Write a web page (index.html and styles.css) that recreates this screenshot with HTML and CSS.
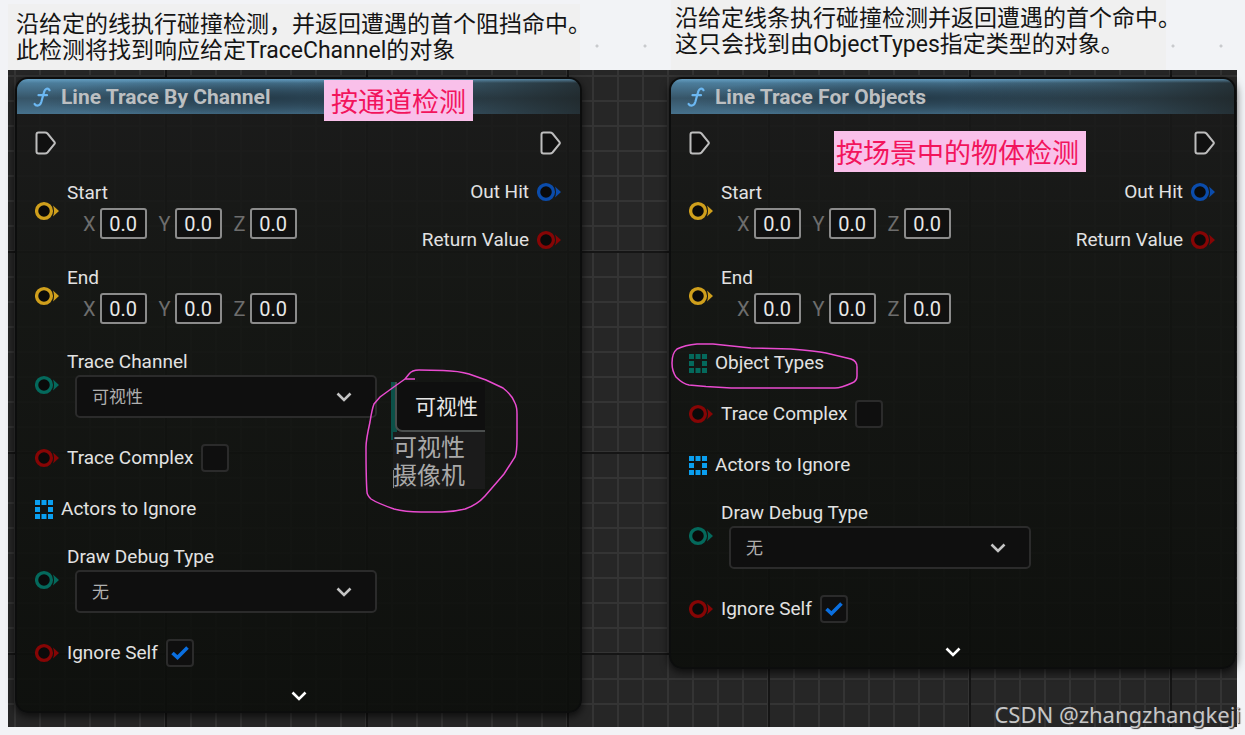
FILE: index.html
```
<!DOCTYPE html>
<html lang="zh-CN">
<head>
<meta charset="utf-8">
<title>Line Trace</title>
<link rel="stylesheet" href="styles.css">
</head>
<body>
<svg class="defs" aria-hidden="true">
  <symbol id="pin" viewBox="0 0 24 20">
    <circle cx="9" cy="10" r="7.400" fill="#0a0a0a" stroke="currentColor" stroke-width="3.300"/>
    <path d="M18 4.500 24 10l-6 5.500q2-5.500 0-11z" fill="currentColor"/>
  </symbol>
  <symbol id="exec" viewBox="0 0 21 24">
    <path d="M3.500 1.500H10q1.500 0 2.500 1L19.500 11q.7 1 0 2l-7 8.500q-1 1-2.500 1H3.500q-2 0-2-2v-17q0-2 2-2z" fill="#101010" stroke="#bdbdbd" stroke-width="2"/>
  </symbol>
  <symbol id="array" viewBox="0 0 18 19">
    <path d="M0 0h5v5H0zM6.500 0h5v5h-5zM13 0h5v5h-5zM0 7h5v5H0zM13 7h5v5h-5zM0 14h5v5H0zM6.500 14h5v5h-5zM13 14h5v5h-5z" fill="currentColor"/>
  </symbol>
  <symbol id="chevron" viewBox="0 0 16 10">
    <path d="M1.500 1.500 8 8l6.500-6.500" fill="none" stroke="currentColor" stroke-width="2.600"/>
  </symbol>
  <symbol id="tick" viewBox="0 0 18 14">
    <path d="M1.500 7 6.500 11.500 16.500 1.500" fill="none" stroke="#0a6fe0" stroke-width="3.600"/>
  </symbol>
  <symbol id="func" viewBox="0 0 18 20">
    <path d="M16.500 3.200Q15.500 1.200 13.600 1.800 11.600 2.500 10.800 6L8.300 15Q7.200 18.600 4.500 18.600 2.400 18.600 1.600 17M5.500 8.200H14" fill="none" stroke="#6cb8f2" stroke-width="2.200" stroke-linecap="round"/>
  </symbol>
</svg>

<header class="notes">
  <p class="note note-channel">沿给定的线执行碰撞检测，并返回遭遇的首个阻挡命中。<br>此检测将找到响应给定TraceChannel的对象</p>
  <p class="note note-objects">沿给定线条执行碰撞检测并返回遭遇的首个命中。<br>这只会找到由ObjectTypes指定类型的对象。</p>
</header>

<main class="canvas">
  <section class="node">
    <h2 class="title"><svg class="i-func"><use href="#func"/></svg>Line Trace By Channel</h2>
    <div class="body">
      <div class="inputs">
        <div class="row exec"><svg class="i-exec"><use href="#exec"/></svg></div>
        <div class="row vector">
          <svg class="i-pin yellow"><use href="#pin"/></svg>
          <fieldset class="field"><legend>Start</legend>
            <div class="axes">
              <label>X<input type="text" value="0.0"></label>
              <label>Y<input type="text" value="0.0"></label>
              <label>Z<input type="text" value="0.0"></label>
            </div>
          </fieldset>
        </div>
        <div class="row vector">
          <svg class="i-pin yellow"><use href="#pin"/></svg>
          <fieldset class="field"><legend>End</legend>
            <div class="axes">
              <label>X<input type="text" value="0.0"></label>
              <label>Y<input type="text" value="0.0"></label>
              <label>Z<input type="text" value="0.0"></label>
            </div>
          </fieldset>
        </div>
        <div class="row choice">
          <svg class="i-pin teal"><use href="#pin"/></svg>
          <div class="field"><label for="channel">Trace Channel</label>
            <div class="select"><select id="channel"><option>可视性</option><option>摄像机</option></select><svg class="i-chevron"><use href="#chevron"/></svg></div>
          </div>
        </div>
        <div class="row check">
          <svg class="i-pin red"><use href="#pin"/></svg>
          <label for="complex1">Trace Complex</label>
          <span class="box"><input type="checkbox" id="complex1"><svg class="i-tick"><use href="#tick"/></svg></span>
        </div>
        <div class="row array"><svg class="i-array sky"><use href="#array"/></svg>Actors to Ignore</div>
        <div class="row choice">
          <svg class="i-pin teal"><use href="#pin"/></svg>
          <div class="field"><label for="debug1">Draw Debug Type</label>
            <div class="select"><select id="debug1"><option>无</option></select><svg class="i-chevron"><use href="#chevron"/></svg></div>
          </div>
        </div>
        <div class="row check">
          <svg class="i-pin red"><use href="#pin"/></svg>
          <label for="self1">Ignore Self</label>
          <span class="box"><input type="checkbox" id="self1" checked><svg class="i-tick"><use href="#tick"/></svg></span>
        </div>
      </div>
      <div class="outputs">
        <div class="row exec"><svg class="i-exec"><use href="#exec"/></svg></div>
        <div class="row array">Out Hit<svg class="i-pin blue"><use href="#pin"/></svg></div>
        <div class="row array">Return Value<svg class="i-pin red"><use href="#pin"/></svg></div>
      </div>
    </div>
    <button class="more" aria-label="展开"><svg class="i-chevron"><use href="#chevron"/></svg></button>

    <strong class="tag tag-channel">按通道检测</strong>
    <div class="popup">
      <div class="current">可视性</div>
      <ul class="options"><li>可视性</li><li class="active">摄像机</li></ul>
    </div>
    <svg class="ring ring-popup" viewBox="0 0 154 144">
      <path d="M50 10H40L44 5Q47 1 54 1L78 1.500Q94 2 104 5L121 11 138 19Q147 26 150 34 152 38 152 45V70Q152 83 150 88L139 105 120 127Q112 136 100 140 88 143 77 143H56Q40 143 29 140 12 134 6 130 2 126 2 123 1 110 1 78 1 71 5 53 7 40 9 35L15 28 26 20 40 10" fill="none" stroke="#e94bd0" stroke-width="1.500"/>
    </svg>
  </section>

  <section class="node">
    <h2 class="title"><svg class="i-func"><use href="#func"/></svg>Line Trace For Objects</h2>
    <div class="body">
      <div class="inputs">
        <div class="row exec"><svg class="i-exec"><use href="#exec"/></svg></div>
        <div class="row vector">
          <svg class="i-pin yellow"><use href="#pin"/></svg>
          <fieldset class="field"><legend>Start</legend>
            <div class="axes">
              <label>X<input type="text" value="0.0"></label>
              <label>Y<input type="text" value="0.0"></label>
              <label>Z<input type="text" value="0.0"></label>
            </div>
          </fieldset>
        </div>
        <div class="row vector">
          <svg class="i-pin yellow"><use href="#pin"/></svg>
          <fieldset class="field"><legend>End</legend>
            <div class="axes">
              <label>X<input type="text" value="0.0"></label>
              <label>Y<input type="text" value="0.0"></label>
              <label>Z<input type="text" value="0.0"></label>
            </div>
          </fieldset>
        </div>
        <div class="row array"><svg class="i-array teal"><use href="#array"/></svg>Object Types</div>
        <div class="row check">
          <svg class="i-pin red"><use href="#pin"/></svg>
          <label for="complex2">Trace Complex</label>
          <span class="box"><input type="checkbox" id="complex2"><svg class="i-tick"><use href="#tick"/></svg></span>
        </div>
        <div class="row array"><svg class="i-array sky"><use href="#array"/></svg>Actors to Ignore</div>
        <div class="row choice">
          <svg class="i-pin teal"><use href="#pin"/></svg>
          <div class="field"><label for="debug2">Draw Debug Type</label>
            <div class="select"><select id="debug2"><option>无</option></select><svg class="i-chevron"><use href="#chevron"/></svg></div>
          </div>
        </div>
        <div class="row check">
          <svg class="i-pin red"><use href="#pin"/></svg>
          <label for="self2">Ignore Self</label>
          <span class="box"><input type="checkbox" id="self2" checked><svg class="i-tick"><use href="#tick"/></svg></span>
        </div>
      </div>
      <div class="outputs">
        <div class="row exec"><svg class="i-exec"><use href="#exec"/></svg></div>
        <div class="row array">Out Hit<svg class="i-pin blue"><use href="#pin"/></svg></div>
        <div class="row array">Return Value<svg class="i-pin red"><use href="#pin"/></svg></div>
      </div>
    </div>
    <button class="more" aria-label="展开"><svg class="i-chevron"><use href="#chevron"/></svg></button>

    <strong class="tag tag-objects">按场景中的物体检测</strong>
    <svg class="ring ring-types" viewBox="0 0 187 46">
      <path d="M26 1H42L80 5 120 6Q145 8 155 10L180 16Q186 18 186 24V33Q186 38 181 40 170 45 164 45H60L35 43.500 18 42Q12 41 5 34 1 28 1 20 1 10 6 6 14 2 26 1z" fill="none" stroke="#e94bd0" stroke-width="1.500"/>
    </svg>
  </section>
  <div class="watermark">CSDN @zhangzhangkeji</div>
</main>
</body>
</html>
```
FILE: styles.css
```
* { box-sizing: border-box; }

body {
  margin: 0;
  padding: 0 8px 8px;
  background: #f2f3f6;
  font-family: Roboto, "Noto Sans CJK SC", sans-serif;
  font-size: 19px;
  line-height: 20px;
  color: #e2e2e2;
}

.defs { position: absolute; width: 0; height: 0; }
svg { display: block; flex: none; }

/* notes above the graph */
.notes {
  display: grid;
  grid-template-columns: 572px 495px;
  column-gap: 91px;
  height: 70px;
  background: radial-gradient(circle at 13px 46px, #c9cacd 0 1px, transparent 2px) 0 0 / 48px 70px;
}
.note {
  margin: 0;
  background: #f0f0f0;
  color: #151515;
  font-size: 23px;
  line-height: 26px;
  white-space: nowrap;
}
.note-channel { margin-top: 4px; padding: 8px; }
.note-objects { padding: 6px 4px; }

/* graph */
.canvas {
  position: relative;
  display: flex;
  align-items: flex-start;
  gap: 87px;
  padding: 7px 1px 14px 7px;
  background-color: #262626;
  background-image:
    linear-gradient(to right, #151515 2px, transparent 2px),
    linear-gradient(#151515 2px, transparent 2px),
    repeating-linear-gradient(to right, #343434 0 2px, transparent 2px 25px),
    repeating-linear-gradient(#343434 0 2px, transparent 2px 25px);
  background-size: 201px 201px;
  background-position: 157px 181px;
}

.node {
  position: relative;
  flex: 1;
  border: 2px solid #0c0d0d;
  border-radius: 13px;
  background: linear-gradient(rgba(26, 26, 26, .88), rgba(19, 21, 18, .88) 35%, rgba(12, 14, 11, .9));
  box-shadow: 0 3px 8px rgba(0, 0, 0, .7);
}

.title {
  display: flex;
  align-items: center;
  gap: 10px;
  height: 35px;
  margin: 0;
  padding-left: 16px;
  border-radius: 11px 11px 0 0;
  color: #bcbfc1;
  font-size: 21px;
  font-weight: 700;
  background:
    linear-gradient(#6ba4c8aa, transparent 4px),
    linear-gradient(to right, transparent 50%, rgba(28, 32, 32, .8)),
    radial-gradient(ellipse 42% 60% at 44% 55%, #253c4b, #253c4b00),
    linear-gradient(#5187a8, #375568 55%, #46718c);
}

.body {
  display: flex;
  justify-content: space-between;
  padding: 17px 19px 0 18px;
}
.inputs { display: flex; flex-direction: column; gap: 27px; }
.outputs { display: flex; flex-direction: column; align-items: flex-end; gap: 26px; }

.row { display: flex; align-items: center; gap: 8px; }
.exec { height: 24px; }
.vector { height: 58px; }
.choice { height: 66px; }
.check { height: 26px; }
.array { height: 22px; }

.field {
  display: flex;
  flex-direction: column;
  gap: 3px;
  margin: 0;
  padding: 0;
  border: 0;
}
.field legend { padding: 0; }

.axes { display: flex; gap: 12px; padding: 5px 0 0 16px; font-size: 20px; }
.axes label { display: flex; align-items: center; color: #6d6d6d; }
.axes input {
  width: 47px;
  height: 31px;
  margin-left: 4px;
  padding: 0;
  border: 2px solid #8b8b8b;
  border-radius: 3px;
  background: #101010;
  color: #e8e8e8;
  font: inherit;
  text-align: center;
}

.select { display: grid; align-items: center; width: 302px; margin-left: 8px; }
.select > * { grid-area: 1 / 1; }
.select select {
  appearance: none;
  width: 100%;
  height: 43px;
  padding: 0 15px 2px;
  border: 2px solid #2b2b2b;
  border-radius: 5px;
  background: #0f0f0f;
  color: #b0b0b0;
  font: 17px "Noto Sans CJK SC", sans-serif;
}
.select .i-chevron { justify-self: end; margin-right: 25px; color: #c4c4c4; pointer-events: none; }

.box { display: grid; place-items: center; }
.box > * { grid-area: 1 / 1; }
.box input {
  appearance: none;
  width: 28px;
  height: 28px;
  margin: 0;
  border: 2px solid #2b2b2b;
  border-radius: 4px;
  background: #0f0f0f;
}
.box .i-tick { visibility: hidden; pointer-events: none; }
.box input:checked + .i-tick { visibility: visible; }

.more {
  display: block;
  margin: 25px auto 0;
  padding: 0 0 10px;
  border: 0;
  background: none;
  color: #fff;
}

.i-pin { width: 24px; height: 20px; }
.i-exec { width: 21px; height: 24px; }
.i-array { width: 18px; height: 19px; }
.i-chevron { width: 16px; height: 10px; }
.i-tick { width: 18px; height: 14px; }
.i-func { width: 18px; height: 20px; }

.yellow { color: #cf9f1c; }
.teal { color: #04695c; }
.red { color: #860505; }
.blue { color: #0b4cab; }
.sky { color: #0a9ff0; }

/* annotations over the graph */
.tag {
  position: absolute;
  background: #f9c0ea;
  color: #f2145c;
  font: 27px/41px "Noto Sans CJK SC", sans-serif;
  white-space: nowrap;
}
.tag-channel { left: 307px; top: 1px; padding: 0 7px; }
.tag-objects { left: 163px; top: 52px; padding: 0 7px 0 2px; }

.popup {
  position: absolute;
  left: 374px;
  top: 303px;
  width: 94px;
  background: linear-gradient(#0b5048, #0b5048) 0 0 / 6px 58px no-repeat;
  font-family: "Noto Sans CJK SC", sans-serif;
}
.current {
  margin-left: 4px;
  padding: 0 0 2px 18px;
  border: solid #4a4e4d;
  border-width: 0 0 2px 2px;
  border-radius: 0 0 0 7px;
  background: #0f0f0f;
  color: #e6e6e6;
  font-size: 21px;
  line-height: 46px;
}
.options {
  margin: 0 0 0 2px;
  padding: 0 0 1px;
  background: #1b1b1b;
  color: #a9a9a9;
  font-size: 24px;
  line-height: 28px;
  list-style: none;
}
.options .active { background: linear-gradient(#8a8a8a, #8a8a8a) 0 100% / 1px 18px no-repeat; }

.ring { position: absolute; }
.ring-popup { left: 348px; top: 290px; width: 154px; height: 144px; }
.ring-types { left: 0; top: 264px; width: 187px; height: 46px; }

.watermark {
  position: absolute;
  right: -4px;
  bottom: 0;
  color: #c6c6c6;
  font: 22px/26px "Noto Sans", sans-serif;
  text-shadow: 1px 1px 1px #333;
}
```
